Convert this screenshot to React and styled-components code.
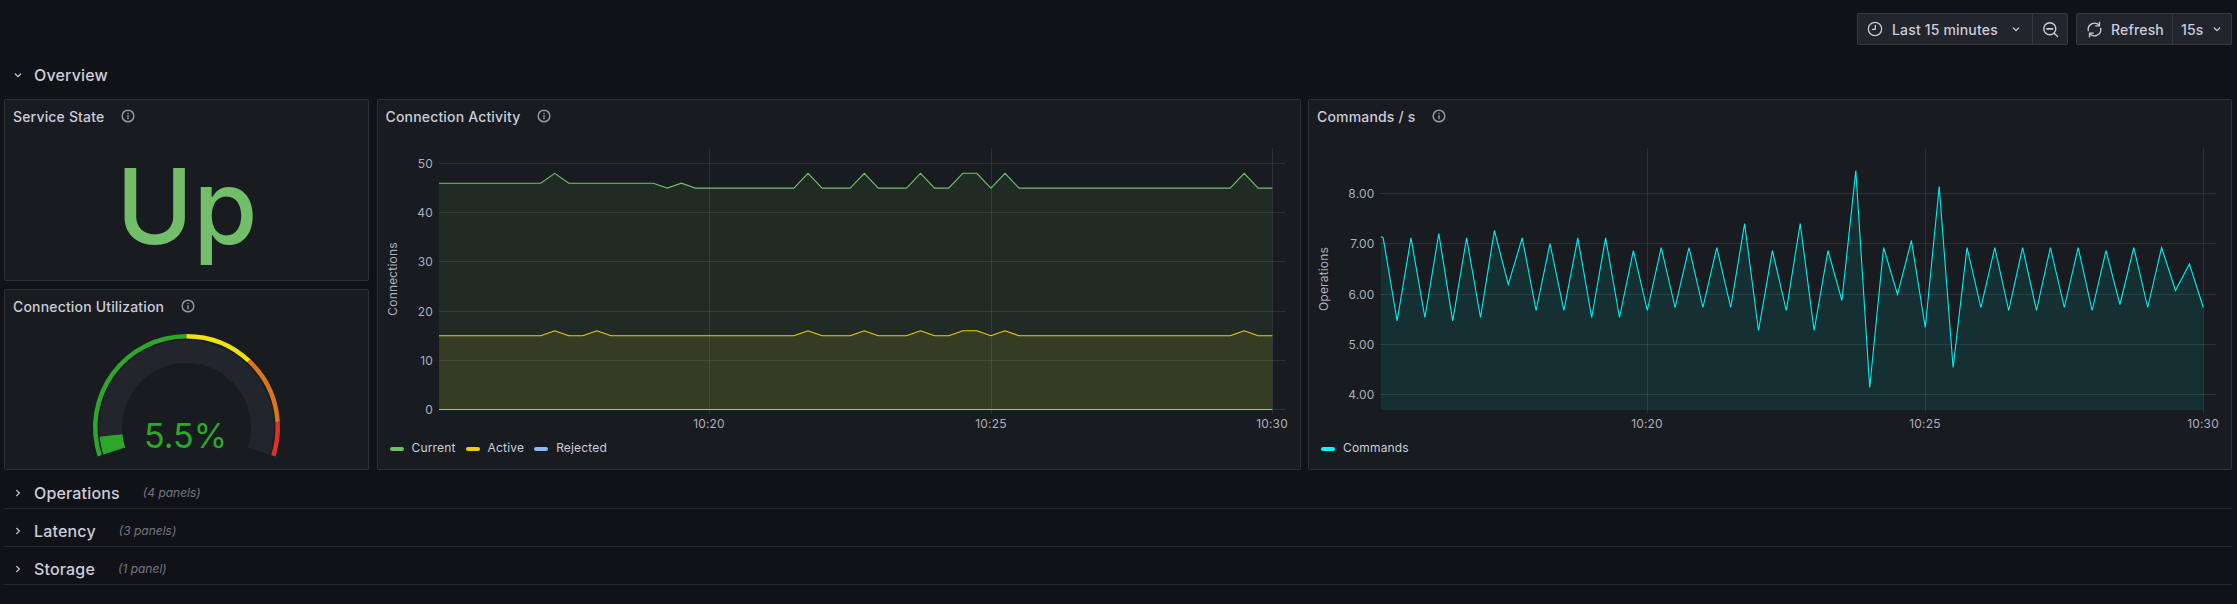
import styled, { createGlobalStyle } from 'styled-components'

const GlobalStyle = createGlobalStyle`
  html, body {
    margin: 0;
    height: 100%;
    background: #111217;
    overflow: hidden;
  }
  body {
    font-family: Inter, "Noto Sans", sans-serif;
    letter-spacing: 0.01071em;
    color: #ccccdc;
  }
`

const Page = styled.div`
  padding: 13px 5px 0 4px;
`

const Toolbar = styled.div`
  display: flex;
  justify-content: flex-end;
  gap: 8px;
  margin-bottom: 14px;
`

const ButtonGroup = styled.div`
  display: flex;
`

const ToolButton = styled.div`
  display: flex;
  align-items: center;
  height: 32px;
  box-sizing: border-box;
  width: ${(p) => p.$width}px;
  padding-left: ${(p) => p.$pad}px;
  gap: ${(p) => p.$gap || 0}px;
  background: #22252b;
  border: 1px solid rgba(204, 204, 220, 0.12);
  margin-left: -1px;
  font-size: 14px;
  font-weight: 500;
  white-space: nowrap;
  &:first-child {
    margin-left: 0;
    border-radius: 2px 0 0 2px;
  }
  &:last-child {
    border-radius: 0 2px 2px 0;
  }
`

const ButtonLabel = styled.span`
  width: ${(p) => p.$width}px;
`

const Row = styled.div`
  display: flex;
  align-items: center;
  box-sizing: border-box;
  height: ${(p) => (p.$open ? 32 : 38)}px;
  padding: ${(p) => (p.$open ? 0 : '6px')} 0 0 6px;
  margin-bottom: ${(p) => (p.$open ? 8 : 0)}px;
  border-bottom: ${(p) => (p.$open ? 'none' : '1px solid rgba(204, 204, 220, 0.12)')};
`

const RowTitle = styled.span`
  margin-left: 8px;
  font-size: 16px;
  font-weight: 500;
`

const RowCount = styled.span`
  margin-left: 23px;
  font-size: 12px;
  font-style: italic;
  letter-spacing: 0;
  color: rgba(204, 204, 220, 0.55);
`

const PanelGrid = styled.div`
  display: grid;
  grid-template-columns: 365px 924px 924px;
  grid-template-rows: 182px 181px;
  column-gap: 7.5px;
  row-gap: 8px;
  margin-bottom: 1px;
`

const Panel = styled.section`
  display: flex;
  flex-direction: column;
  box-sizing: border-box;
  min-height: 0;
  background: #181b1f;
  border: 1px solid rgba(204, 204, 220, 0.12);
  border-radius: 2px;
  grid-column: ${(p) => p.$column || 1};
  grid-row: ${(p) => (p.$column ? '1 / span 2' : 'auto')};
`

const PanelHeader = styled.header`
  display: flex;
  align-items: center;
  flex: none;
  height: 32px;
  padding-left: 8px;
  gap: 17px;
  font-size: 14px;
  font-weight: 500;
`

const StatBody = styled.div`
  flex: 1;
  display: flex;
  align-items: center;
  justify-content: center;
  padding-left: 1px;
  font-size: 104px;
  line-height: 1;
  font-weight: 500;
  letter-spacing: 0;
  color: #73bf69;
`

const Plot = styled.svg`
  display: block;
  flex: none;
`

const Legend = styled.div`
  display: flex;
  padding-left: 12px;
  gap: 10px;
  font-size: 12px;
  line-height: 22px;
`

const LegendItem = styled.div`
  display: flex;
  align-items: center;
  gap: 8px;
`

const LegendLine = styled.i`
  display: block;
  width: 14px;
  height: 4px;
  margin-top: 2px;
  border-radius: 2px;
  background: ${(p) => p.$color};
`

const AxisText = styled.text`
  font-size: 12px;
  fill: #ccccdc;
  fill-opacity: 0.85;
`

const GaugeText = styled.text`
  font-size: 34px;
  letter-spacing: 0;
  fill: #2ea62b;
`

const GridLine = styled.line`
  stroke: rgba(204, 204, 220, 0.12);
  stroke-width: 1;
  shape-rendering: crispEdges;
`

const Icon = ({ size = 16, color = '#ccccdc', width = 1.9, children }) => (
  <svg width={size} height={size} viewBox="0 0 24 24" fill="none" stroke={color} strokeWidth={width} strokeLinecap="round" strokeLinejoin="round" style={{ flex: 'none' }}>
    {children}
  </svg>
)

const ChevronDown = () => (
  <Icon><path d="M8 10.5l4 4 4-4" /></Icon>
)

const ChevronRight = () => (
  <Icon><path d="M10 8l4 4-4 4" /></Icon>
)

const ClockIcon = () => (
  <Icon><circle cx="12" cy="12" r="10" /><path d="M12.5 6.5V12.5H8" /></Icon>
)

const ZoomOutIcon = () => (
  <Icon size={17} width={2}>
    <circle cx="11" cy="11" r="8.5" />
    <path d="M7 11h8" strokeWidth="2.4" />
    <path d="M17.5 17.5L22 22" />
  </Icon>
)

const SyncIcon = () => (
  <Icon size={17} width={1.9}>
    <path d="M3.2 13.5A9 9 0 0 1 18.5 5.8" />
    <path d="M19 1.5V6.8H13.8" />
    <path d="M20.8 10.5A9 9 0 0 1 5.5 18.2" />
    <path d="M5 22.5V17.2H10.2" />
  </Icon>
)

const InfoIcon = () => (
  <Icon size={14} color="#96979f" width={2.5}>
    <circle cx="12" cy="12" r="10" />
    <path d="M12 11.5v5" />
    <path d="M12 7.5v.1" />
  </Icon>
)

// samples are 15s apart, j counts back from the right edge
const steps = (count, base, peaks) =>
  Array.from({ length: count }, (_, i) => {
    const j = count - 1 - i
    if (peaks[j] !== undefined) return { j, v: peaks[j] }
    return { j, v: typeof base === 'function' ? base(j) : base }
  })

const currentSeries = steps(61, (j) => (j > 41 ? 46 : 45), {
  51: 48, 43: 45, 33: 48, 29: 48, 25: 48, 22: 48, 21: 48, 19: 48, 2: 48,
})

const activeSeries = steps(61, 15, {
  51: 16, 48: 16, 33: 16, 29: 16, 25: 16, 22: 16, 21: 16, 19: 16, 2: 16,
})

const rejectedSeries = steps(61, 0, {})

const commandValues = [
  7.118, 5.466, 7.118, 5.532, 7.204, 5.466, 7.118, 5.532, 7.264, 6.189,
  7.118, 5.672, 7.005, 5.672, 7.118, 5.532, 7.118, 5.532, 6.866, 5.672,
  6.925, 5.731, 6.925, 5.731, 6.925, 5.731, 7.403, 5.274, 6.866, 5.672,
  7.403, 5.274, 6.866, 5.871, 8.458, 4.139, 6.925, 5.99, 7.065, 5.333,
  8.139, 4.537, 6.925, 5.731, 6.925, 5.672, 6.925, 5.672, 6.925, 5.731,
  6.925, 5.672, 6.866, 5.791, 6.925, 5.731, 6.925, 6.07, 6.6, 5.731,
]

const commandSeries = [
  { j: 59.17, v: 7.144 },
  ...commandValues.map((v, i) => ({ j: 59 - i, v })),
]

const connectionChart = {
  id: 'conn',
  origin: [378, 132],
  size: [922, 305],
  left: 439,
  right: 1285,
  dataRight: 1272.3,
  step: 14.07,
  floor: 409.5,
  toY: (v) => 409.5 - v * 4.92,
  yLabel: 'Connections',
  yLabelX: 392,
  tickEnd: 433,
  gridBottom: 414,
  yTicks: [
    ['50', 163.5], ['40', 212.5], ['30', 261.5], ['20', 311.5], ['10', 360.5], ['0', 409.5],
  ],
  xTicks: [['10:20', 709.5], ['10:25', 991.5], ['10:30', 1272.5]],
  series: [
    { data: currentSeries, color: '#73bf69' },
    { data: activeSeries, color: '#f2cc0c' },
    { data: rejectedSeries, color: '#8ab8ff', flat: true },
  ],
}

const commandsChart = {
  id: 'cmd',
  origin: [1309, 132],
  size: [922, 305],
  left: 1380,
  right: 2216,
  dataRight: 2203.3,
  step: 13.9,
  floor: 410,
  toY: (v) => 394.5 - (v - 4) * 50.25,
  yLabel: 'Operations',
  yLabelX: 1323,
  tickEnd: 1374.5,
  gridBottom: 413,
  yTicks: [
    ['8.00', 193.5], ['7.00', 243.5], ['6.00', 294.5], ['5.00', 344.5], ['4.00', 394.5],
  ],
  xTicks: [['10:20', 1647.5], ['10:25', 1925.5], ['10:30', 2203.5]],
  series: [{ data: commandSeries, color: '#00f0f0' }],
}

const TimeChart = ({ chart }) => {
  const { origin, size, left, right, dataRight, step, floor, toY } = chart
  const clipId = `${chart.id}-clip`
  const toPoints = (data) =>
    data.map((d) => `${(dataRight - d.j * step).toFixed(1)},${toY(d.v).toFixed(1)}`)

  return (
    <Plot width={size[0]} height={size[1]} viewBox={`${origin[0]} ${origin[1]} ${size[0]} ${size[1]}`}>
      <clipPath id={clipId}>
        <rect x={left} y={origin[1]} width={dataRight - left + 1} height={size[1]} />
      </clipPath>
      {chart.yTicks.map(([label, y]) => (
        <g key={label}>
          <GridLine x1={left} x2={right} y1={y} y2={y} />
          <AxisText x={chart.tickEnd} y={y + 4} textAnchor="end">{label}</AxisText>
        </g>
      ))}
      {chart.xTicks.map(([label, x]) => (
        <g key={label}>
          <GridLine x1={x} x2={x} y1={148} y2={chart.gridBottom} />
          <AxisText x={x - 0.5} y={428} textAnchor="middle">{label}</AxisText>
        </g>
      ))}
      <AxisText
        x={chart.yLabelX}
        y={279}
        textAnchor="middle"
        dominantBaseline="central"
        transform={`rotate(-90 ${chart.yLabelX} 279)`}
      >
        {chart.yLabel}
      </AxisText>
      <g clipPath={`url(#${clipId})`}>
        {chart.series.map((s) => {
          const pts = toPoints(s.data)
          const firstX = pts[0].split(',')[0]
          const lastX = pts[pts.length - 1].split(',')[0]
          return (
            <g key={s.color}>
              {!s.flat && (
                <polygon
                  points={`${firstX},${floor} ${pts.join(' ')} ${lastX},${floor}`}
                  fill={s.color}
                  fillOpacity="0.1"
                />
              )}
              <polyline points={pts.join(' ')} fill="none" stroke={s.color} strokeWidth="1.1" />
            </g>
          )
        })}
      </g>
    </Plot>
  )
}

const CENTER = [186.5, 427.5]

const polar = (r, deg) => {
  const a = (deg * Math.PI) / 180
  return [CENTER[0] + r * Math.cos(a), CENTER[1] - r * Math.sin(a)]
}

const arcPath = (outer, inner, from, to) => {
  const large = from - to > 180 ? 1 : 0
  const [x1, y1] = polar(outer, from)
  const [x2, y2] = polar(outer, to)
  const [x3, y3] = polar(inner, to)
  const [x4, y4] = polar(inner, from)
  return `M${x1} ${y1}A${outer} ${outer} 0 ${large} 1 ${x2} ${y2}L${x3} ${y3}A${inner} ${inner} 0 ${large} 0 ${x4} ${y4}Z`
}

const thresholds = [
  { from: 198, to: 90, color: '#2ea62b' },
  { from: 90, to: 46.8, color: '#f2e30c' },
  { from: 46.8, to: 3.6, color: '#d9761e' },
  { from: 3.6, to: -18, color: '#e02f2f' },
]

const Gauge = () => (
  <Plot width={363} height={147} viewBox="5 322 363 147">
    <path d={arcPath(87.5, 64.5, 198, -18)} fill="#22252b" />
    <path d={arcPath(87.5, 64.5, 198, 186.1)} fill="#2ea62b" />
    {thresholds.map((t) => (
      <path key={t.color} d={arcPath(93.5, 89, t.from, t.to)} fill={t.color} />
    ))}
    <GaugeText x={185.5} y={448} textAnchor="middle">5.5%</GaugeText>
  </Plot>
)

const collapsedRows = [
  ['Operations', '(4 panels)'],
  ['Latency', '(3 panels)'],
  ['Storage', '(1 panel)'],
]

const App = () => {
  return (
    <Page>
      <GlobalStyle />
      <Toolbar>
        <ButtonGroup>
          <ToolButton $width={176} $pad={9} $gap={9}>
            <ClockIcon />
            <ButtonLabel $width={107}>Last 15 minutes</ButtonLabel>
            <ChevronDown />
          </ToolButton>
          <ToolButton $width={36} $pad={9}>
            <ZoomOutIcon />
          </ToolButton>
        </ButtonGroup>
        <ButtonGroup>
          <ToolButton $width={97} $pad={9} $gap={8}>
            <SyncIcon />
            <span>Refresh</span>
          </ToolButton>
          <ToolButton $width={60} $pad={8} $gap={5}>
            <span>15s</span>
            <ChevronDown />
          </ToolButton>
        </ButtonGroup>
      </Toolbar>

      <Row $open>
        <ChevronDown />
        <RowTitle>Overview</RowTitle>
      </Row>

      <PanelGrid>
        <Panel>
          <PanelHeader>Service State<InfoIcon /></PanelHeader>
          <StatBody>Up</StatBody>
        </Panel>
        <Panel>
          <PanelHeader>Connection Utilization<InfoIcon /></PanelHeader>
          <Gauge />
        </Panel>
        <Panel $column={2}>
          <PanelHeader>Connection Activity<InfoIcon /></PanelHeader>
          <TimeChart chart={connectionChart} />
          <Legend>
            <LegendItem><LegendLine $color="#73bf69" />Current</LegendItem>
            <LegendItem><LegendLine $color="#f2cc0c" />Active</LegendItem>
            <LegendItem><LegendLine $color="#8ab8ff" />Rejected</LegendItem>
          </Legend>
        </Panel>
        <Panel $column={3}>
          <PanelHeader>Commands / s<InfoIcon /></PanelHeader>
          <TimeChart chart={commandsChart} />
          <Legend>
            <LegendItem><LegendLine $color="#00ffff" />Commands</LegendItem>
          </Legend>
        </Panel>
      </PanelGrid>

      {collapsedRows.map(([title, count]) => (
        <Row key={title}>
          <ChevronRight />
          <RowTitle>{title}</RowTitle>
          <RowCount>{count}</RowCount>
        </Row>
      ))}
    </Page>
  )
}

export default App
